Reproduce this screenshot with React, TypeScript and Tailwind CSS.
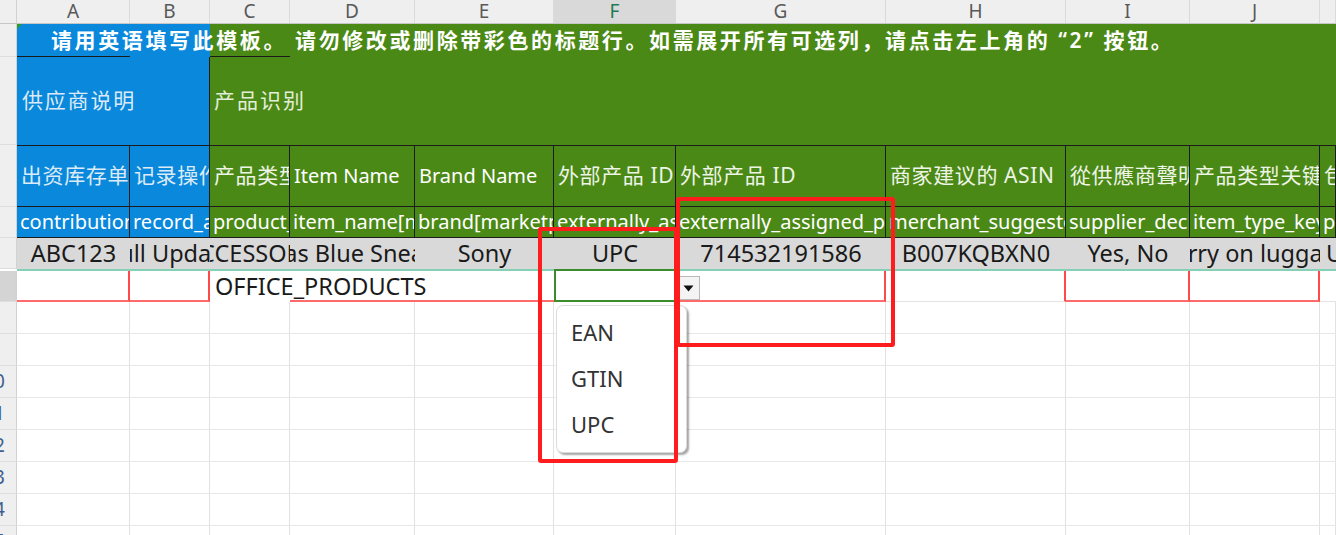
const W = [
  "w-[113px]",
  "w-[80px]",
  "w-[80px]",
  "w-[125px]",
  "w-[139px]",
  "w-[122px]",
  "w-[210px]",
  "w-[180px]",
  "w-[124px]",
  "w-[130px]",
  "flex-1",
];
const LETTERS = ["A", "B", "C", "D", "E", "F", "G", "H", "I", "J", ""];

const TITLE_ROW3 = [
  "出资库存单位编号",
  "记录操作",
  "产品类型",
  "Item Name",
  "Brand Name",
  "外部产品 ID",
  "外部产品 ID",
  "商家建议的 ASIN",
  "從供應商聲明",
  "产品类型关键字",
  "包装",
];
const FIELDS = [
  "contribution_sku",
  "record_action",
  "product_type",
  "item_name[marketplace_id]",
  "brand[marketplace_id]",
  "externally_assigned_product_identifier",
  "externally_assigned_product_identifier",
  "merchant_suggested_asin",
  "supplier_declared_dg_hz_regulation",
  "item_type_keyword",
  "product_description",
];
const SAMPLE = [
  "ABC123",
  "Full Update",
  "ACCESSORY",
  "Adidas Blue Sneakers",
  "Sony",
  "UPC",
  "714532191586",
  "B007KQBXN0",
  "Yes, No",
  "Carry on luggage",
  "UPC",
];

// which input-row cells carry the red "required" outline
const REQUIRED = [
  "border-r-2 border-b-2 border-r-[#ff4a4a] border-b-[#ff6a6a]",
  "border-r-2 border-b-2 border-r-[#ff4a4a] border-b-[#ff6a6a]",
  "",
  "border-b-2 border-b-[#ff6a6a]",
  "border-b-2 border-b-[#ff6a6a]",
  "",
  "border-r-2 border-b-2 border-r-[#ff4a4a] border-b-[#ff6a6a]",
  "border-r-2 border-b border-r-[#ff4a4a] border-b-[#e3e3e3]",
  "border-r-2 border-b-2 border-r-[#ff4a4a] border-b-[#ff6a6a]",
  "border-r-2 border-b-2 border-r-[#ff4a4a] border-b-[#ff6a6a]",
  "border-b border-b-[#e3e3e3]",
];

function RowHead({ n, className }: { n: number; className: string }) {
  return (
    <div
      className={`relative w-[17px] shrink-0 overflow-hidden border-r border-b border-r-[#d2d2d2] border-b-[#dedede] ${className}`}
    >
      <span className="absolute left-[-26px] top-0 flex h-full w-[40px] items-center justify-center text-[19px] text-[#3f5f8e]">
        {n}
      </span>
    </div>
  );
}

export default function App() {
  const blue = "bg-[#0a88dc]";
  const green = "bg-[#4b8916]";

  return (
    <div className="relative h-[535px] w-full overflow-hidden bg-white font-['Noto_Sans','Noto_Sans_CJK_SC',sans-serif]">
      {/* column letters */}
      <div className="flex h-[24px] border-b border-[#c6c6c6] bg-[#efefef]">
        <div className="w-[17px] shrink-0 border-r border-[#d2d2d2]" />
        {LETTERS.map((l, i) => (
          <div
            key={i}
            className={`${W[i]} flex shrink-0 items-center justify-center border-r border-[#dadada] text-[19px] leading-none ${
              l === "F" ? "bg-[#d9d9d9] text-[#1d7a55]" : "text-[#595959]"
            }`}
          >
            {l}
          </div>
        ))}
      </div>

      {/* row 1: instruction */}
      <div className="relative flex h-[33px]">
        <RowHead n={1} className="bg-[#efefef]" />
        <div className={`flex w-[193px] shrink-0 ${blue}`}>
          <div className="relative w-[113px] border-b border-[#1a1a1a]">
            <span className="absolute left-0 top-0 h-0 w-0 border-l-[5px] border-b-[5px] border-l-[#2e9a2e] border-b-transparent" />
          </div>
          <div className="w-[80px]" />
        </div>
        <div className={`flex flex-1 ${green}`}>
          <div className="w-[80px] border-b border-[#1a1a1a]" />
        </div>
        <span className="absolute left-[51px] top-0 flex h-full items-center whitespace-nowrap text-[21px] font-semibold tracking-[2.6px] text-white">
          请用英语填写此模板。 请勿修改或删除带彩色的标题行。如需展开所有可选列，请点击左上角的 “2” 按钮。
        </span>
      </div>

      {/* row 2: groups */}
      <div className="flex h-[88px]">
        <RowHead n={2} className="bg-[#efefef]" />
        <div
          className={`flex w-[193px] shrink-0 items-center border-r border-[#1a1a1a] pl-[5px] text-[21px] tracking-[1.8px] text-[#dbeaf6] ${blue}`}
        >
          供应商说明
        </div>
        <div
          className={`flex flex-1 items-center pl-[4px] text-[21px] tracking-[2px] text-[#e4eed9] ${green}`}
        >
          产品识别
        </div>
      </div>

      {/* row 3: labels */}
      <div className="flex h-[62px]">
        <RowHead n={3} className="bg-[#efefef]" />
        {TITLE_ROW3.map((t, i) => (
          <div
            key={i}
            className={`${W[i]} flex shrink-0 items-center overflow-hidden whitespace-nowrap border-r border-y border-[#1c1c1c] pl-[4px] ${
              i === 3 || i === 4 ? "text-[20px] text-white" : "text-[21px] tracking-[0.6px]"
            } ${i < 2 ? `${blue} text-[#dcebf6]` : `${green} text-[#eef4e6]`}`}
          >
            {t}
          </div>
        ))}
      </div>

      {/* row 4: field names */}
      <div className="flex h-[31px]">
        <RowHead n={4} className="bg-[#efefef]" />
        {FIELDS.map((t, i) => (
          <div
            key={i}
            className={`${W[i]} flex shrink-0 items-center overflow-hidden whitespace-nowrap border-r border-b border-[#1c1c1c] pl-[3px] text-[20px] text-white ${
              i < 2 ? blue : green
            }`}
          >
            {t}
          </div>
        ))}
      </div>

      {/* row 5: example */}
      <div className="flex h-[31px]">
        <RowHead n={5} className="bg-[#efefef]" />
        {SAMPLE.map((t, i) => (
          <div
            key={i}
            className={`${W[i]} flex shrink-0 items-center overflow-hidden whitespace-nowrap bg-[#d9d9d9] text-[23.5px] text-[#1a1a1a] ${
              i === 10 ? "justify-start pl-[6px]" : "justify-center"
            }`}
          >
            {t}
          </div>
        ))}
      </div>
      <div className="ml-[17px] h-[2px] bg-[#86d0b6]" />

      {/* row 6: input row */}
      <div className="flex h-[31px]">
        <RowHead n={6} className="border-r-2 border-r-[#3f9a3f] bg-[#d4d4d4]" />
        {W.map((w, i) =>
          i === 2 ? (
            <div key={i} className={`${w} relative flex shrink-0 items-center pl-[5px]`}>
              <span className="relative z-10 whitespace-nowrap text-[23.5px] text-[#1a1a1a]">
                OFFICE_PRODUCTS
              </span>
            </div>
          ) : i === 5 ? (
            <div key={i} className={`${w} -mt-[2px] h-[33px] shrink-0 border-2 border-[#3a8c2c]`} />
          ) : (
            <div key={i} className={`${w} shrink-0 ${REQUIRED[i]}`} />
          )
        )}
      </div>

      {/* empty rows */}
      {[7, 8, 9, 10, 11, 12, 13, 14].map((n) => (
        <div key={n} className="flex h-[32px]">
          <RowHead n={n + 1} className="bg-[#efefef]" />
          {W.map((w, i) => (
            <div key={i} className={`${w} shrink-0 border-r border-b border-r-[#e2e2e2] border-b-[#e8e8e8]`} />
          ))}
        </div>
      ))}

      {/* dropdown arrow button */}
      <div className="absolute left-[677px] top-[276px] flex h-[24px] w-[23px] items-center justify-center border border-[#b9b9b9] bg-[#f4f4f4]">
        <svg width="11" height="7" viewBox="0 0 11 7">
          <path d="M0.5 0.5 L10.5 0.5 L5.5 6.5 Z" fill="#111" />
        </svg>
      </div>

      {/* dropdown list */}
      <div className="absolute left-[556px] top-[305px] h-[148px] w-[131px] rounded-[7px] border border-[#dcdcdc] bg-white pt-[3px] text-[22px] text-[#333] shadow-[2px_2px_2px_rgba(0,0,0,0.35)]">
        <div className="flex h-[46px] items-center pl-[14px]">EAN</div>
        <div className="flex h-[46px] items-center pl-[14px]">GTIN</div>
        <div className="flex h-[46px] items-center pl-[14px]">UPC</div>
      </div>

      {/* annotation boxes */}
      <div className="pointer-events-none absolute left-[538px] top-[227px] h-[236px] w-[140px] rounded-[3px] border-[4px] border-[#ff1c1c]" />
      <div className="pointer-events-none absolute left-[676px] top-[197px] h-[150px] w-[219px] rounded-[3px] border-[4px] border-[#ff1c1c]" />
    </div>
  );
}
